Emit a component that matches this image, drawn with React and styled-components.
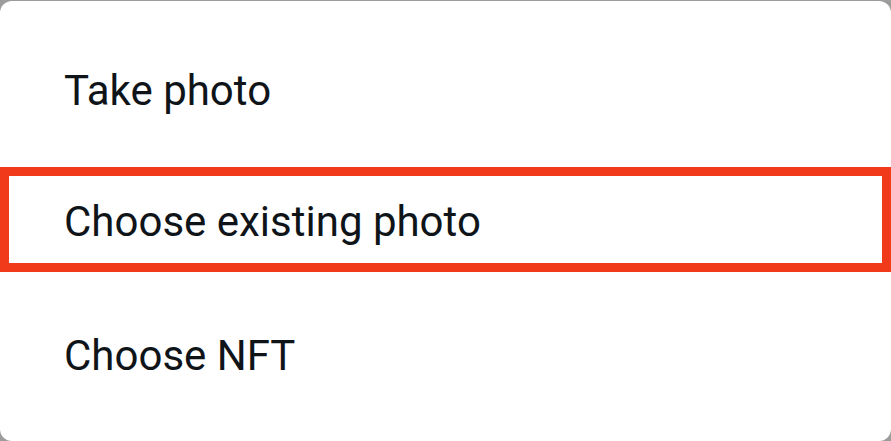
import React from 'react';
import styled, { createGlobalStyle } from 'styled-components';

const GlobalStyle = createGlobalStyle`
  html, body {
    margin: 0;
    padding: 0;
    background: #9c9c9c;
  }
  body {
    font-family: Roboto, "Liberation Sans", sans-serif;
  }
`;

const Sheet = styled.div`
  display: flex;
  flex-direction: column;
  margin-top: 1px;
  width: 891px;
  height: 440px;
  background: #ffffff;
  border-radius: 12px;
  overflow: hidden;
`;

const Option = styled.div`
  box-sizing: border-box;
  height: ${(p) => p.$height}px;
  padding: ${(p) => p.$top}px 0 0 ${(p) => (p.$highlight ? 55 : 64)}px;
  border: ${(p) => (p.$highlight ? '9px solid #f03a1a' : 'none')};
  font-size: 42px;
  line-height: 42px;
  color: #0f1419;
  white-space: nowrap;
`;

const options = [
  { label: 'Take photo', height: 166, top: 69 },
  { label: 'Choose existing photo', height: 105, top: 25, highlight: true },
  { label: 'Choose NFT', height: 169, top: 63 },
];

export default function App() {
  return (
    <>
      <GlobalStyle />
      <Sheet>
        {options.map((o) => (
          <Option key={o.label} $height={o.height} $top={o.top} $highlight={o.highlight}>
            {o.label}
          </Option>
        ))}
      </Sheet>
    </>
  );
}
